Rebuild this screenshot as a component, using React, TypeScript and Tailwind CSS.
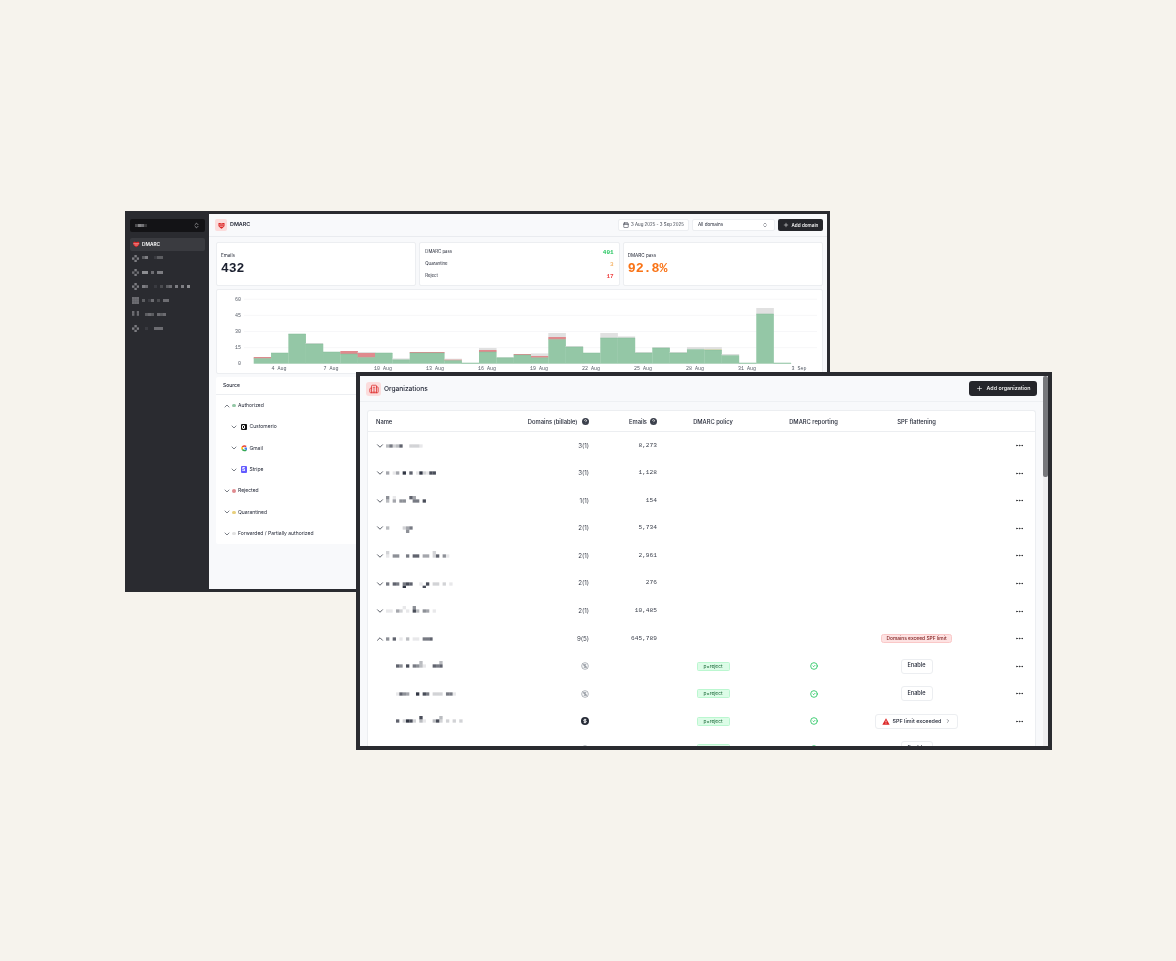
import React from 'react';
import { Building2, Calendar, ChevronDown, ChevronRight, ChevronUp, ChevronsUpDown, CircleCheck, Ellipsis, Plus } from 'lucide-react';

const MONO = "[font-family:'Liberation_Mono',monospace]";

// pixelated (redacted) labels: each digit is the opacity of a cell
const Mosaic = ({ rows, cell = 3.33, color = '#1c2130' }: { rows: string[]; cell?: number; color?: string }) => {
  const width = Math.max(...rows.map((r) => r.length)) * cell;
  return (
    <svg width={width} height={rows.length * cell} className="block shrink-0">
      {rows.map((row, y) =>
        row.split('').map((c, x) =>
          c === '0' ? null : (
            <rect key={`${x}-${y}`} x={x * cell} y={y * cell} width={cell} height={cell} fill={color} opacity={Number(c) / 10} />
          ),
        ),
      )}
    </svg>
  );
};

const ShieldLogo = ({ size = 8 }: { size?: number }) => (
  <svg width={size} height={size} viewBox="0 0 24 24" className="shrink-0">
    <path d="M1 6c0-2 2-3 5-3 3 0 5 1 6 2 1-1 3-2 6-2 3 0 5 1 5 3v5c0 5-6 8-11 12C7 19 1 16 1 11z" fill="#dc2626" />
    <path d="M1 10h22M6 15h12" stroke="#fff" strokeWidth="2" opacity="0.85" />
  </svg>
);

const Help = () => (
  <svg width="7" height="7" viewBox="0 0 24 24" className="shrink-0">
    <circle cx="12" cy="12" r="12" fill="#3a3f4b" />
    <path d="M8.5 9a3.5 3.5 0 0 1 7 .5c0 2-3.5 2.5-3.5 4.5M12 18v.5" fill="none" stroke="#fff" strokeWidth="2.6" />
  </svg>
);

const NoDollar = () => (
  <svg width="8" height="8" viewBox="0 0 24 24" fill="none" stroke="#8a8f99" strokeWidth="2">
    <circle cx="12" cy="12" r="10" />
    <path d="M16 8h-6a2 2 0 1 0 0 4h4a2 2 0 1 1 0 4H8M12 18V6M5 5l14 14" />
  </svg>
);

const Dollar = () => (
  <svg width="8" height="8" viewBox="0 0 24 24" fill="none">
    <circle cx="12" cy="12" r="12" fill="#252a36" />
    <path d="M16 8h-6a2 2 0 1 0 0 4h4a2 2 0 1 1 0 4H8M12 19V5" stroke="#fff" strokeWidth="2.6" />
  </svg>
);

const GoogleMark = () => (
  <svg width="6.5" height="6.5" viewBox="0 0 24 24" fill="none" strokeWidth="6" className="shrink-0">
    <path d="M5 8a9 9 0 0 1 14-2" stroke="#ea4335" />
    <path d="M5 8a9 9 0 0 0 0 8" stroke="#fbbc05" />
    <path d="M5 16a9 9 0 0 0 14 2" stroke="#34a853" />
    <path d="M19 18a9 9 0 0 0 2-6h-8" stroke="#4285f4" />
  </svg>
);

const sideRows = [
  { icon: ['050', '505', '050'], text: ['3500133', '0000000'] },
  { icon: ['050', '404', '050'], text: ['660405500'] },
  { icon: ['050', '505', '050'], text: ['5400102034050506'] },
  { icon: ['444', '444', '444'], text: ['3014020440'] },
  { icon: ['404', '404', '000'], text: ['03430434'] },
  { icon: ['050', '505', '050'], text: ['0100444'] },
];

// segment heights in px: green, red, yellow, gray
const bars: number[][] = [
  [5.3, 1.4, 0, 0], [10.7, 0, 0, 0], [29.7, 0, 0, 0], [19.7, 0, 0, 1], [11.7, 0, 0, 0], [9.7, 3, 0, 0],
  [6.3, 4.4, 0, 1], [10.7, 0, 0, 0], [4, 0, 0, 1.3], [10.7, 1, 0, 0], [10.7, 1, 0, 0], [3.3, 1, 0, 0.7],
  [0.7, 0, 0, 0], [11.7, 2, 0, 2], [6, 0, 0, 0.5], [8.7, 1, 0, 0], [6, 1.7, 0, 2.6], [24.3, 2.4, 0, 4],
  [16.7, 0, 0, 1], [10.7, 0, 0, 0], [25.7, 0, 0, 5], [25.7, 0, 0, 1.6], [10.7, 0, 0, 1], [15.7, 0, 0, 1],
  [10.7, 0, 0, 1], [14.3, 0, 0, 2.4], [13.7, 0, 0.6, 2.4], [8.3, 0, 0, 1.4], [0.7, 0, 0, 0], [49.7, 0, 0, 6],
  [0.7, 0, 0, 0],
];
const barColors = ['#94c7a6', '#e08a8e', '#e8cf7c', '#e1e1e1'];
const BASE = 363.7;
const X0 = 253.7;
const BW = 17.33;

const xLabels = ['3 Aug', '4 Aug', '', '', '7 Aug', '', '', '10 Aug', '', '', '13 Aug', '', '', '16 Aug', '', '', '19 Aug', '', '', '22 Aug', '', '', '25 Aug', '', '', '28 Aug', '', '', '31 Aug', '', '', '3 Sep'];

const Chart = () => (
  <svg viewBox="217 290 605 83" className="block h-full w-full">
    {[60, 45, 30, 15, 0].map((v, i) => (
      <g key={v}>
        {v > 0 && <line x1="244" x2="817" y1={299.3 + i * 16.1} y2={299.3 + i * 16.1} stroke="#f3f4f6" strokeWidth="0.7" />}
        <text x="241" y={301 + i * 16.1} textAnchor="end" fontSize="5" fill="#555b66" fontFamily="'Liberation Mono', monospace">{v}</text>
      </g>
    ))}
    {bars.map((b, i) => {
      let top = BASE;
      return (
        <g key={i}>
          {b.map((h, j) => {
            if (!h) return null;
            top -= h;
            return <rect key={j} x={X0 + i * BW} y={top} width={BW + 0.25} height={h} fill={barColors[j]} />;
          })}
          <line x1={X0 + i * BW} x2={X0 + (i + 1) * BW} y1={BASE - b[0]} y2={BASE - b[0]} stroke="#82bb97" strokeWidth="0.5" />
        </g>
      );
    })}
    {xLabels.map((l, i) =>
      l && i > 0 ? (
        <text key={l} x={X0 + (i + 0.5) * BW - 0.7} y="369.8" textAnchor="middle" fontSize="5" fill="#555b66" fontFamily="'Liberation Mono', monospace">{l}</text>
      ) : null,
    )}
  </svg>
);

const sources = [
  { label: 'Authorized', dot: 'bg-[#94c7a6]', open: true },
  { label: 'Customerio', sub: <div className="flex h-[6.5px] w-[6.5px] items-center justify-center rounded-[1px] bg-[#111]"><div className="h-[3.5px] w-[3px] rounded-[1px] border border-white" /></div> },
  { label: 'Gmail', sub: <GoogleMark /> },
  { label: 'Stripe', sub: <div className="flex h-[6.5px] w-[6.5px] items-center justify-center rounded-[1px] bg-[#635bff] text-[5px] font-bold leading-none text-white">S</div> },
  { label: 'Rejected', dot: 'bg-[#e08a8e]' },
  { label: 'Quarantined', dot: 'bg-[#e8cf7c]' },
  { label: 'Forwarded / Partially authorized', dot: 'bg-[#e1e1e1]' },
];

const orgs = [
  { rows: ['00000000000', '36237002221', '00000000000'], domains: '3(1)', emails: '8,273' },
  { rows: ['000000000000000', '401409070192188', '000000000000000'], domains: '3(1)', emails: '1,128' },
  { rows: ['5010000740000', '3040550066080', '0000000000000'], domains: '1(1)', emails: '154' },
  { rows: ['00000000', '30000246', '00000050'], domains: '2(1)', emails: '5,734' },
  { rows: ['2000000000000020000', '1055006077044027051', '0000000000000000000'], domains: '2(1)', emails: '2,961' },
  { rows: ['00000000000000000000', '60760687001080220201', '00000900000800000000'], domains: '2(1)', emails: '276' },
  { rows: ['000001005000000', '110420108305401', '000000000000000'], domains: '2(1)', emails: '10,485' },
];

const domains = [
  { rows: ['00000003000003', '75080653100767', '00000000000000'], icon: <NoDollar /> },
  { rows: ['000000000000000000', '175400908602220661', '000000000000000000'], icon: <NoDollar /> },
  { rows: ['00000008000003000000', '70298203100382020202', '00000000000000000000'], icon: <Dollar /> },
  { rows: ['00000000000000', '00000000000000', '00000000000000'], icon: <NoDollar /> },
];

const COUNT = 'text-right text-[6.2px] leading-none text-[#3a3f4b]';
const ROW = 'grid h-[27.55px] grid-cols-[152px_69px_68px_112px_89px_117px_61px] items-center';

const RowMenu = () => (
  <div className="flex justify-end pr-[12px]">
    <Ellipsis size={9} color="#2a2b30" strokeWidth={2.4} />
  </div>
);

export default function App() {
  return (
    <div className="relative h-[961px] w-[1176px] overflow-hidden bg-[#f6f3ed] [font-family:Inter,sans-serif] text-[#1c2130] [filter:blur(0.3px)]">
      {/* DMARC window */}
      <div className="absolute left-[125px] top-[211px] flex h-[381px] w-[705px] overflow-hidden border-[3px] border-[#2a2b30]">
        <aside className="flex w-[81px] shrink-0 flex-col bg-[#2a2b30] pl-[2px] pr-[4px]">
          <div className="mt-[5px] flex h-[13px] items-center justify-between rounded-[2px] bg-[#131316] pl-[5px] pr-[5px]">
            <Mosaic rows={['3652']} cell={3} color="#d0d0d4" />
            <ChevronsUpDown size={7} color="#d4d4d8" />
          </div>
          <div className="mt-[6px] flex h-[13px] items-center gap-[2.5px] rounded-[2px] bg-[#3a3b40] pl-[3px]">
            <ShieldLogo size={6.5} />
            <span className="text-[4.8px] font-semibold leading-none text-white">DMARC</span>
          </div>
          <div className="mt-[0.5px] flex flex-col">
            {sideRows.map((r, i) => (
              <div key={i} className="flex h-[14px] items-center gap-[2.5px] pl-[2px]">
                <Mosaic rows={r.icon} cell={2.4} color="#d0d0d4" />
                <Mosaic rows={r.text} cell={3} color="#d0d0d4" />
              </div>
            ))}
          </div>
        </aside>

        <main className="flex min-w-0 flex-1 flex-col bg-[#f8f9fb]">
          <header className="flex h-[23px] shrink-0 items-center justify-between border-b border-[#e9ebef] pl-[6px] pr-[4px]">
            <div className="flex items-center gap-[3px]">
              <div className="flex h-[12px] w-[12px] items-center justify-center rounded-[2px] bg-[#fbdcdc]">
                <ShieldLogo size={7} />
              </div>
              <span className="text-[5.4px] font-semibold leading-none">DMARC</span>
            </div>
            <div className="flex items-center gap-[3px]">
              <div className="flex h-[11.5px] w-[71px] items-center justify-center gap-[2px] rounded-[2px] border border-[#eceef1] bg-white">
                <Calendar size={6} color="#1c2130" />
                <span className="text-[4.4px] leading-none text-[#3a3f4b]">3 Aug 2025 - 3 Sep 2025</span>
              </div>
              <div className="flex h-[11.5px] w-[83px] items-center justify-between rounded-[2px] border border-[#eceef1] bg-white pl-[5px] pr-[6px]">
                <span className="text-[4.6px] leading-none">All domains</span>
                <ChevronsUpDown size={6} color="#3a3f4b" />
              </div>
              <div className="flex h-[11.5px] w-[45px] items-center justify-center gap-[3px] rounded-[2px] bg-[#25262b]">
                <Plus size={6} color="#fff" />
                <span className="text-[4.7px] font-medium leading-none text-white">Add domain</span>
              </div>
            </div>
          </header>

          <div className="flex flex-col gap-[3px] pl-[7px] pr-[4px] pt-[5px]">
            <div className="grid h-[44px] grid-cols-3 gap-[3px]">
              <div className="flex flex-col justify-center rounded-[2px] border border-[#eceef1] bg-white pl-[4px] pt-[1px]">
                <span className="text-[4.6px] leading-none">Emails</span>
                <span className={`mt-[3px] text-[13px] font-bold leading-[13px] ${MONO}`}>432</span>
              </div>
              <div className="flex flex-col justify-center rounded-[2px] border border-[#eceef1] bg-white px-[5px] pt-[1px]">
                {[
                  ['DMARC pass', '401', 'text-[#22c55e]'],
                  ['Quarantine', '3', 'text-[#f5b56a]'],
                  ['Reject', '17', 'text-[#ef4444]'],
                ].map(([label, value, color]) => (
                  <div key={label} className="flex h-[12px] items-center justify-between">
                    <span className="text-[4.3px] leading-none">{label}</span>
                    <span className={`text-[6px] font-bold leading-none ${MONO} ${color}`}>{value}</span>
                  </div>
                ))}
              </div>
              <div className="flex flex-col justify-center rounded-[2px] border border-[#eceef1] bg-white pl-[4px] pt-[1px]">
                <span className="text-[4.6px] leading-none">DMARC pass</span>
                <span className={`mt-[3px] text-[13.3px] font-bold leading-[13px] text-[#f97316] ${MONO}`}>92.8%</span>
              </div>
            </div>

            <div className="h-[85px] rounded-[2px] border border-[#eceef1] bg-white">
              <Chart />
            </div>

            <div className="h-[167px] rounded-[2px] bg-white">
              <div className="flex h-[18px] items-center border-b border-[#eceef1] pl-[7px]">
                <span className="text-[5px] font-medium leading-none">Source</span>
              </div>
              {sources.map((s) => (
                <div key={s.label} className="flex h-[21.33px] items-center">
                  {s.sub ? (
                    <div className="flex items-center pl-[14px]">
                      <ChevronDown size={8} color="#3a3f4b" />
                      <div className="ml-[2.5px]">{s.sub}</div>
                      <span className="ml-[2.5px] text-[5px] leading-none">{s.label}</span>
                    </div>
                  ) : (
                    <div className="flex items-center pl-[6.5px]">
                      {s.open ? <ChevronUp size={8} color="#3a3f4b" /> : <ChevronDown size={8} color="#3a3f4b" />}
                      <div className={`ml-[1.5px] h-[3.5px] w-[3.5px] rounded-full ${s.dot}`} />
                      <span className="ml-[2.5px] text-[5px] leading-none">{s.label}</span>
                    </div>
                  )}
                </div>
              ))}
            </div>
          </div>
        </main>
      </div>

      {/* Organizations window */}
      <div className="absolute left-[356px] top-[372px] flex h-[378px] w-[696px] flex-col overflow-hidden border-4 border-[#2a2b30] bg-[#f8f9fb]">
        <header className="flex h-[26px] shrink-0 items-center justify-between border-b border-[#eef0f3] pl-[6px] pr-[11px]">
          <div className="flex items-center gap-[3px]">
            <div className="flex h-[14px] w-[15px] items-center justify-center rounded-[3px] bg-[#fbdcdc]">
              <Building2 size={10} color="#dc2626" strokeWidth={1.8} />
            </div>
            <span className="mt-[1px] text-[6.6px] font-medium leading-none">Organizations</span>
          </div>
          <div className="flex h-[14.5px] w-[68px] items-center justify-center gap-[4px] rounded-[3px] bg-[#25262b]">
            <Plus size={7} color="#fff" />
            <span className="text-[5.4px] font-medium leading-none text-white">Add organization</span>
          </div>
        </header>

        <div className="min-h-0 flex-1 pl-[7px] pr-[12px] pt-[8px]">
          <div className="rounded-t-[3px] border-x border-t border-[#eceef1] bg-white">
            <div className="grid h-[21px] grid-cols-[152px_69px_68px_112px_89px_117px_61px] items-center border-b border-[#eceef1] pt-[1px] text-[5.8px] font-medium leading-none">
              <span className="pl-[8px]">Name</span>
              <div className="flex items-center justify-end gap-[4px] pr-[0.5px]">
                <span className="whitespace-nowrap">Domains (billable)</span>
                <Help />
              </div>
              <div className="flex items-center justify-end gap-[2.5px] pr-[0.5px]">
                <span>Emails</span>
                <Help />
              </div>
              <span className="text-center">DMARC policy</span>
              <span className="text-center">DMARC reporting</span>
              <span className="text-center">SPF flattening</span>
              <span />
            </div>

            {orgs.map((o, i) => (
              <div key={i} className={ROW}>
                <div className="flex items-center pl-[7px]">
                  <ChevronDown size={10} color="#3a3f4b" />
                  <div className="ml-[1.3px]">
                    <Mosaic rows={o.rows} />
                  </div>
                </div>
                <span className={COUNT}>{o.domains}</span>
                <span className={`${COUNT} ${MONO}`}>{o.emails}</span>
                <span />
                <span />
                <span />
                <RowMenu />
              </div>
            ))}

            <div className={ROW}>
              <div className="flex items-center pl-[7px]">
                <ChevronUp size={10} color="#3a3f4b" />
                <div className="ml-[1.3px]">
                  <Mosaic rows={['000000000000000', '507010301106670', '000000000000000']} />
                </div>
              </div>
              <span className={COUNT}>9(5)</span>
              <span className={`${COUNT} ${MONO}`}>645,789</span>
              <span />
              <span />
              <div className="flex justify-center">
                <span className="flex h-[9px] w-[71px] items-center justify-center rounded-[2.5px] border border-[#fac8c8] bg-[#fde2e2] text-[4.9px] font-medium leading-none text-[#7f1d1d]">Domains exceed SPF limit</span>
              </div>
              <RowMenu />
            </div>

            {domains.map((d, i) => (
              <div key={i} className={ROW}>
                <div className="pl-[28px]">
                  <Mosaic rows={d.rows} />
                </div>
                <div className="flex justify-end pr-[0.5px]">{d.icon}</div>
                <span />
                <div className="flex justify-center">
                  <span className="flex h-[9px] w-[33px] items-center justify-center rounded-[1.5px] border border-[#bbf7d0] bg-[#dcfce7] text-[4.8px] leading-none text-[#166534]">p=reject</span>
                </div>
                <div className="flex justify-center">
                  <CircleCheck size={8} color="#22c55e" strokeWidth={2.5} />
                </div>
                <div className="flex justify-center">
                  {i === 2 ? (
                    <span className="flex h-[15px] w-[82.5px] items-center justify-center gap-[3px] rounded-[3px] border border-[#eceef1] bg-white text-[5.4px] font-medium leading-none">
                      <svg width="8" height="7" viewBox="0 0 24 22">
                        <path d="M12 1 23.5 21H.5z" fill="#dc2626" />
                        <path d="M12 8v6M12 16.5v2" stroke="#fff" strokeWidth="2.4" />
                      </svg>
                      SPF limit exceeded
                      <ChevronRight size={6} color="#3a3f4b" className="ml-[1px]" />
                    </span>
                  ) : (
                    <span className="flex h-[15px] w-[32px] items-center justify-center rounded-[3px] border border-[#eceef1] bg-white text-[5.6px] font-medium leading-none">Enable</span>
                  )}
                </div>
                <RowMenu />
              </div>
            ))}
          </div>
        </div>

        {/* scrollbar */}
        <div className="absolute bottom-0 right-0 top-0 w-[5px] bg-[#eeeef0]">
          <div className="h-[101px] rounded-[2px] bg-[#77787c]" />
        </div>
      </div>
    </div>
  );
}
